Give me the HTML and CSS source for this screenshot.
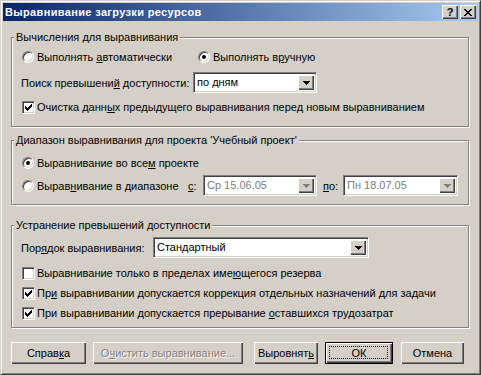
FILE: index.html
```html
<!DOCTYPE html>
<html lang="ru">
<head>
    <meta charset="UTF-8">
    <title>Выравнивание загрузки ресурсов</title>
    <link rel="stylesheet" href="styles.css">
</head>
<body>
    <div class="window">
        <div class="titlebar">
            <span class="title">Выравнивание загрузки ресурсов</span>
            <div class="caption-btns">
                <span class="cap-btn help">?</span>
                <span class="cap-btn">
                    <svg width="8" height="7" viewBox="0 0 8 7" shape-rendering="crispEdges"><path d="M0 0h2v1h-2z M6 0h2v1h-2z M1 1h2v1h-2z M5 1h2v1h-2z M2 2h4v1h-4z M3 3h2v1h-2z M2 4h4v1h-4z M1 5h2v1h-2z M5 5h2v1h-2z M0 6h2v1h-2z M6 6h2v1h-2z" fill="#000"/></svg>
                </span>
            </div>
        </div>

        <div class="content">
            <fieldset class="group g-calc">
                <legend>Вычисления для выравнивания</legend>
                <div class="group-body">
                    <div class="row row-radios">
                        <label class="opt opt-auto"><span class="radio"></span><span>Выполнять <u>а</u>втоматически</span></label>
                        <label class="opt"><span class="radio on"></span><span>Выполнять в<u>р</u>учную</span></label>
                    </div>
                    <div class="row row-search">
                        <span class="lbl lbl-search">Поиск превышени<u>й</u> доступности:</span>
                        <div class="combo combo-days">
                            <span class="val">по дням</span>
                            <span class="drop"><svg width="7" height="4" viewBox="0 0 7 4" shape-rendering="crispEdges"><path d="M0 0h7v1h-7z M1 1h5v1h-5z M2 2h3v1h-3z M3 3h1v1h-1z" fill="#000"/></svg></span>
                        </div>
                    </div>
                    <div class="row row-check">
                        <label class="opt"><span class="check"><svg width="7" height="7" viewBox="0 0 7 7" shape-rendering="crispEdges"><path d="M6 0h1v1h-1z M5 1h2v1h-2z M0 2h1v1h-1z M4 2h3v1h-3z M0 3h2v1h-2z M3 3h3v1h-3z M0 4h5v1h-5z M1 5h3v1h-3z M2 6h1v1h-1z" fill="#000"/></svg></span><span>Очистка данн<u>ы</u>х предыдущего выравнивания перед новым выравниванием</span></label>
                    </div>
                </div>
            </fieldset>

            <fieldset class="group g-range">
                <legend>Диапазон выравнивания для проекта 'Учебный проект'</legend>
                <div class="group-body">
                    <div class="row row-all">
                        <label class="opt"><span class="radio on"></span><span>Выравнивание во все<u>м</u> проекте</span></label>
                    </div>
                    <div class="row row-dates">
                        <label class="opt opt-range"><span class="radio"></span><span>Вырав<u>н</u>ивание в диапазоне</span></label>
                        <span class="lbl lbl-from"><u>с</u>:</span>
                        <div class="combo combo-date disabled">
                            <span class="val">Ср 15.06.05</span>
                            <span class="drop"><svg width="7" height="4" viewBox="0 0 7 4" shape-rendering="crispEdges"><path d="M0 0h7v1h-7z M1 1h5v1h-5z M2 2h3v1h-3z M3 3h1v1h-1z" fill="#808080"/></svg></span>
                        </div>
                        <span class="lbl lbl-to"><u>п</u>о:</span>
                        <div class="combo combo-date combo-to disabled">
                            <span class="val">Пн 18.07.05</span>
                            <span class="drop"><svg width="7" height="4" viewBox="0 0 7 4" shape-rendering="crispEdges"><path d="M0 0h7v1h-7z M1 1h5v1h-5z M2 2h3v1h-3z M3 3h1v1h-1z" fill="#808080"/></svg></span>
                        </div>
                    </div>
                </div>
            </fieldset>

            <fieldset class="group g-resolve">
                <legend>Устранение превышений доступности</legend>
                <div class="group-body">
                    <div class="row row-order">
                        <span class="lbl lbl-order">Пор<u>я</u>док выравнивания:</span>
                        <div class="combo combo-order">
                            <span class="val">Стандартный</span>
                            <span class="drop"><svg width="7" height="4" viewBox="0 0 7 4" shape-rendering="crispEdges"><path d="M0 0h7v1h-7z M1 1h5v1h-5z M2 2h3v1h-3z M3 3h1v1h-1z" fill="#000"/></svg></span>
                        </div>
                    </div>
                    <div class="row row-opt">
                        <label class="opt"><span class="check"></span><span>Выравнивание только в пределах име<u>ю</u>щегося резерва</span></label>
                    </div>
                    <div class="row row-opt">
                        <label class="opt"><span class="check"><svg width="7" height="7" viewBox="0 0 7 7" shape-rendering="crispEdges"><path d="M6 0h1v1h-1z M5 1h2v1h-2z M0 2h1v1h-1z M4 2h3v1h-3z M0 3h2v1h-2z M3 3h3v1h-3z M0 4h5v1h-5z M1 5h3v1h-3z M2 6h1v1h-1z" fill="#000"/></svg></span><span>Пр<u>и</u> выравнивании допускается коррекция отдельных назначений для задачи</span></label>
                    </div>
                    <div class="row row-opt">
                        <label class="opt"><span class="check"><svg width="7" height="7" viewBox="0 0 7 7" shape-rendering="crispEdges"><path d="M6 0h1v1h-1z M5 1h2v1h-2z M0 2h1v1h-1z M4 2h3v1h-3z M0 3h2v1h-2z M3 3h3v1h-3z M0 4h5v1h-5z M1 5h3v1h-3z M2 6h1v1h-1z" fill="#000"/></svg></span><span>При выравнивании допускается прерывание <u>о</u>ставшихся трудозатрат</span></label>
                    </div>
                </div>
            </fieldset>

            <div class="buttons">
                <span class="btn btn-help"><span>Справ<u>к</u>а</span></span>
                <span class="btn btn-clear disabled"><span>О<u>ч</u>истить выравнивание...</span></span>
                <span class="btn btn-level"><span>Выровнят<u>ь</u></span></span>
                <span class="btn btn-ok default"><span>ОК</span></span>
                <span class="btn btn-cancel"><span>Отмена</span></span>
            </div>
        </div>
    </div>
</body>
</html>
```

FILE: styles.css
```css
body {
    margin: 0;
    background: #d4d0c8;
    font-family: "Liberation Sans", Arial, sans-serif;
    font-size: 11px;
    color: #000;
}
u {
    text-underline-offset: 1px;
}
.window {
    width: 481px;
    height: 375px;
    box-sizing: border-box;
    border: 1px solid;
    border-color: #d4d0c8 #404040 #404040 #d4d0c8;
    box-shadow: inset 1px 1px 0 #fff, inset -1px -1px 0 #808080;
    padding: 2px;
    background: #d4d0c8;
}
.titlebar {
    height: 18px;
    display: flex;
    align-items: center;
    justify-content: space-between;
    padding: 0 2px;
    background: linear-gradient(to right, #0a246a, #a6caf0);
}
.title {
    color: #fff;
    font-weight: bold;
    font-size: 11px;
    letter-spacing: 0.35px;
}
.caption-btns {
    display: flex;
    gap: 2px;
}
.cap-btn {
    width: 16px;
    height: 14px;
    box-sizing: border-box;
    display: flex;
    align-items: center;
    justify-content: center;
    background: #d4d0c8;
    box-shadow: inset 1px 1px 0 #fff, inset -1px -1px 0 #404040, inset -2px -2px 0 #808080;
}
.cap-btn.help {
    font-weight: bold;
    font-size: 11px;
    line-height: 14px;
}
.content {
    padding: 10px 9px 0 8px;
}

/* group boxes */
.group {
    margin: 0;
    padding: 0;
    min-width: 0;
    border: 1px solid #808080;
    box-shadow: 1px 1px 0 #fff, inset 1px 1px 0 #fff;
}
.group legend {
    margin-left: 2px;
    padding: 0 2px;
    line-height: 13px;
    background: #d4d0c8;
}
.group-body {
    padding-left: 10px;
}
.g-calc .group-body {
    padding-top: 5px;
    padding-bottom: 11px;
}
.g-range {
    margin-top: 7px;
}
.g-range .group-body {
    padding-top: 8px;
    padding-bottom: 8px;
}
.g-resolve {
    margin-top: 14px;
}
.g-resolve .group-body {
    padding-top: 5px;
    padding-bottom: 4px;
}
.row {
    display: flex;
    align-items: center;
}
.row-radios,
.row-check,
.row-all {
    height: 16px;
}
.row-search {
    margin-top: 7px;
}
.row-check {
    margin-top: 6px;
}
.row-dates {
    margin-top: 4px;
}
.row-order {
    margin-bottom: 5px;
}
.row-opt {
    height: 20px;
}
.opt {
    display: flex;
    align-items: center;
    white-space: nowrap;
}
.opt-auto {
    width: 176px;
}
.opt-range {
    width: 166px;
}
.lbl {
    white-space: nowrap;
}
.lbl-search {
    width: 172px;
    margin-left: -1px;
}
.lbl-from {
    width: 15px;
}
.lbl-to {
    margin-left: 6px;
    width: 20px;
}
.lbl-order {
    width: 132px;
    margin-left: -1px;
}

/* radio and check */
.radio {
    width: 10px;
    height: 10px;
    border-radius: 50%;
    border: 1px solid;
    border-color: #808080 #fff #fff #808080;
    box-shadow: inset 1px 1px 0 #404040, inset -1px -1px 0 #d4d0c8;
    background: #fff;
    margin-right: 3px;
    display: flex;
    align-items: center;
    justify-content: center;
}
.radio.on::after {
    content: "";
    width: 4px;
    height: 4px;
    border-radius: 50%;
    background: #000;
}
.check {
    width: 7px;
    height: 7px;
    padding: 2px;
    border: 1px solid;
    border-color: #808080 #fff #fff #808080;
    box-shadow: inset 1px 1px 0 #404040, inset -1px -1px 0 #d4d0c8;
    background: #fff;
    margin-right: 2px;
    display: flex;
}
.check svg {
    display: block;
}

/* combo boxes */
.combo {
    height: 21px;
    box-sizing: border-box;
    display: flex;
    align-items: stretch;
    padding: 2px;
    background: #fff;
    border: 1px solid;
    border-color: #808080 #fff #fff #808080;
    box-shadow: inset 1px 1px 0 #404040, inset -1px -1px 0 #d4d0c8;
}
.combo .val {
    flex: 1;
    padding-left: 1px;
    line-height: 15px;
}
.combo .drop {
    width: 16px;
    display: flex;
    align-items: center;
    justify-content: center;
    background: #d4d0c8;
    box-shadow: inset 1px 1px 0 #fff, inset -1px -1px 0 #404040, inset -2px -2px 0 #808080;
}
.combo-days {
    width: 124px;
}
.combo-date {
    width: 114px;
}
.combo-to {
    width: 115px;
}
.combo-order {
    width: 216px;
}
.combo.disabled .val {
    color: #808080;
}

/* buttons */
.buttons {
    display: flex;
    margin-top: 14px;
}
.btn {
    height: 22px;
    box-sizing: border-box;
    display: flex;
    align-items: center;
    justify-content: center;
    background: #d4d0c8;
    box-shadow: inset 1px 1px 0 #fff, inset -1px -1px 0 #404040, inset -2px -2px 0 #808080;
    white-space: nowrap;
}
.btn.disabled {
    color: #808080;
    text-shadow: 1px 1px 0 #fff;
}
.btn.default {
    position: relative;
    border: 1px solid #000;
}
.btn.default::after {
    content: "";
    position: absolute;
    left: 3px;
    top: 3px;
    right: 4px;
    bottom: 4px;
    border: 1px dotted #000;
}
.btn-help {
    width: 75px;
}
.btn-clear {
    width: 150px;
    margin-left: 7px;
}
.btn-level {
    width: 64px;
    margin-left: 11px;
}
.btn-ok {
    width: 68px;
    margin-left: 7px;
}
.btn-cancel {
    width: 63px;
    margin-left: 8px;
}
```
